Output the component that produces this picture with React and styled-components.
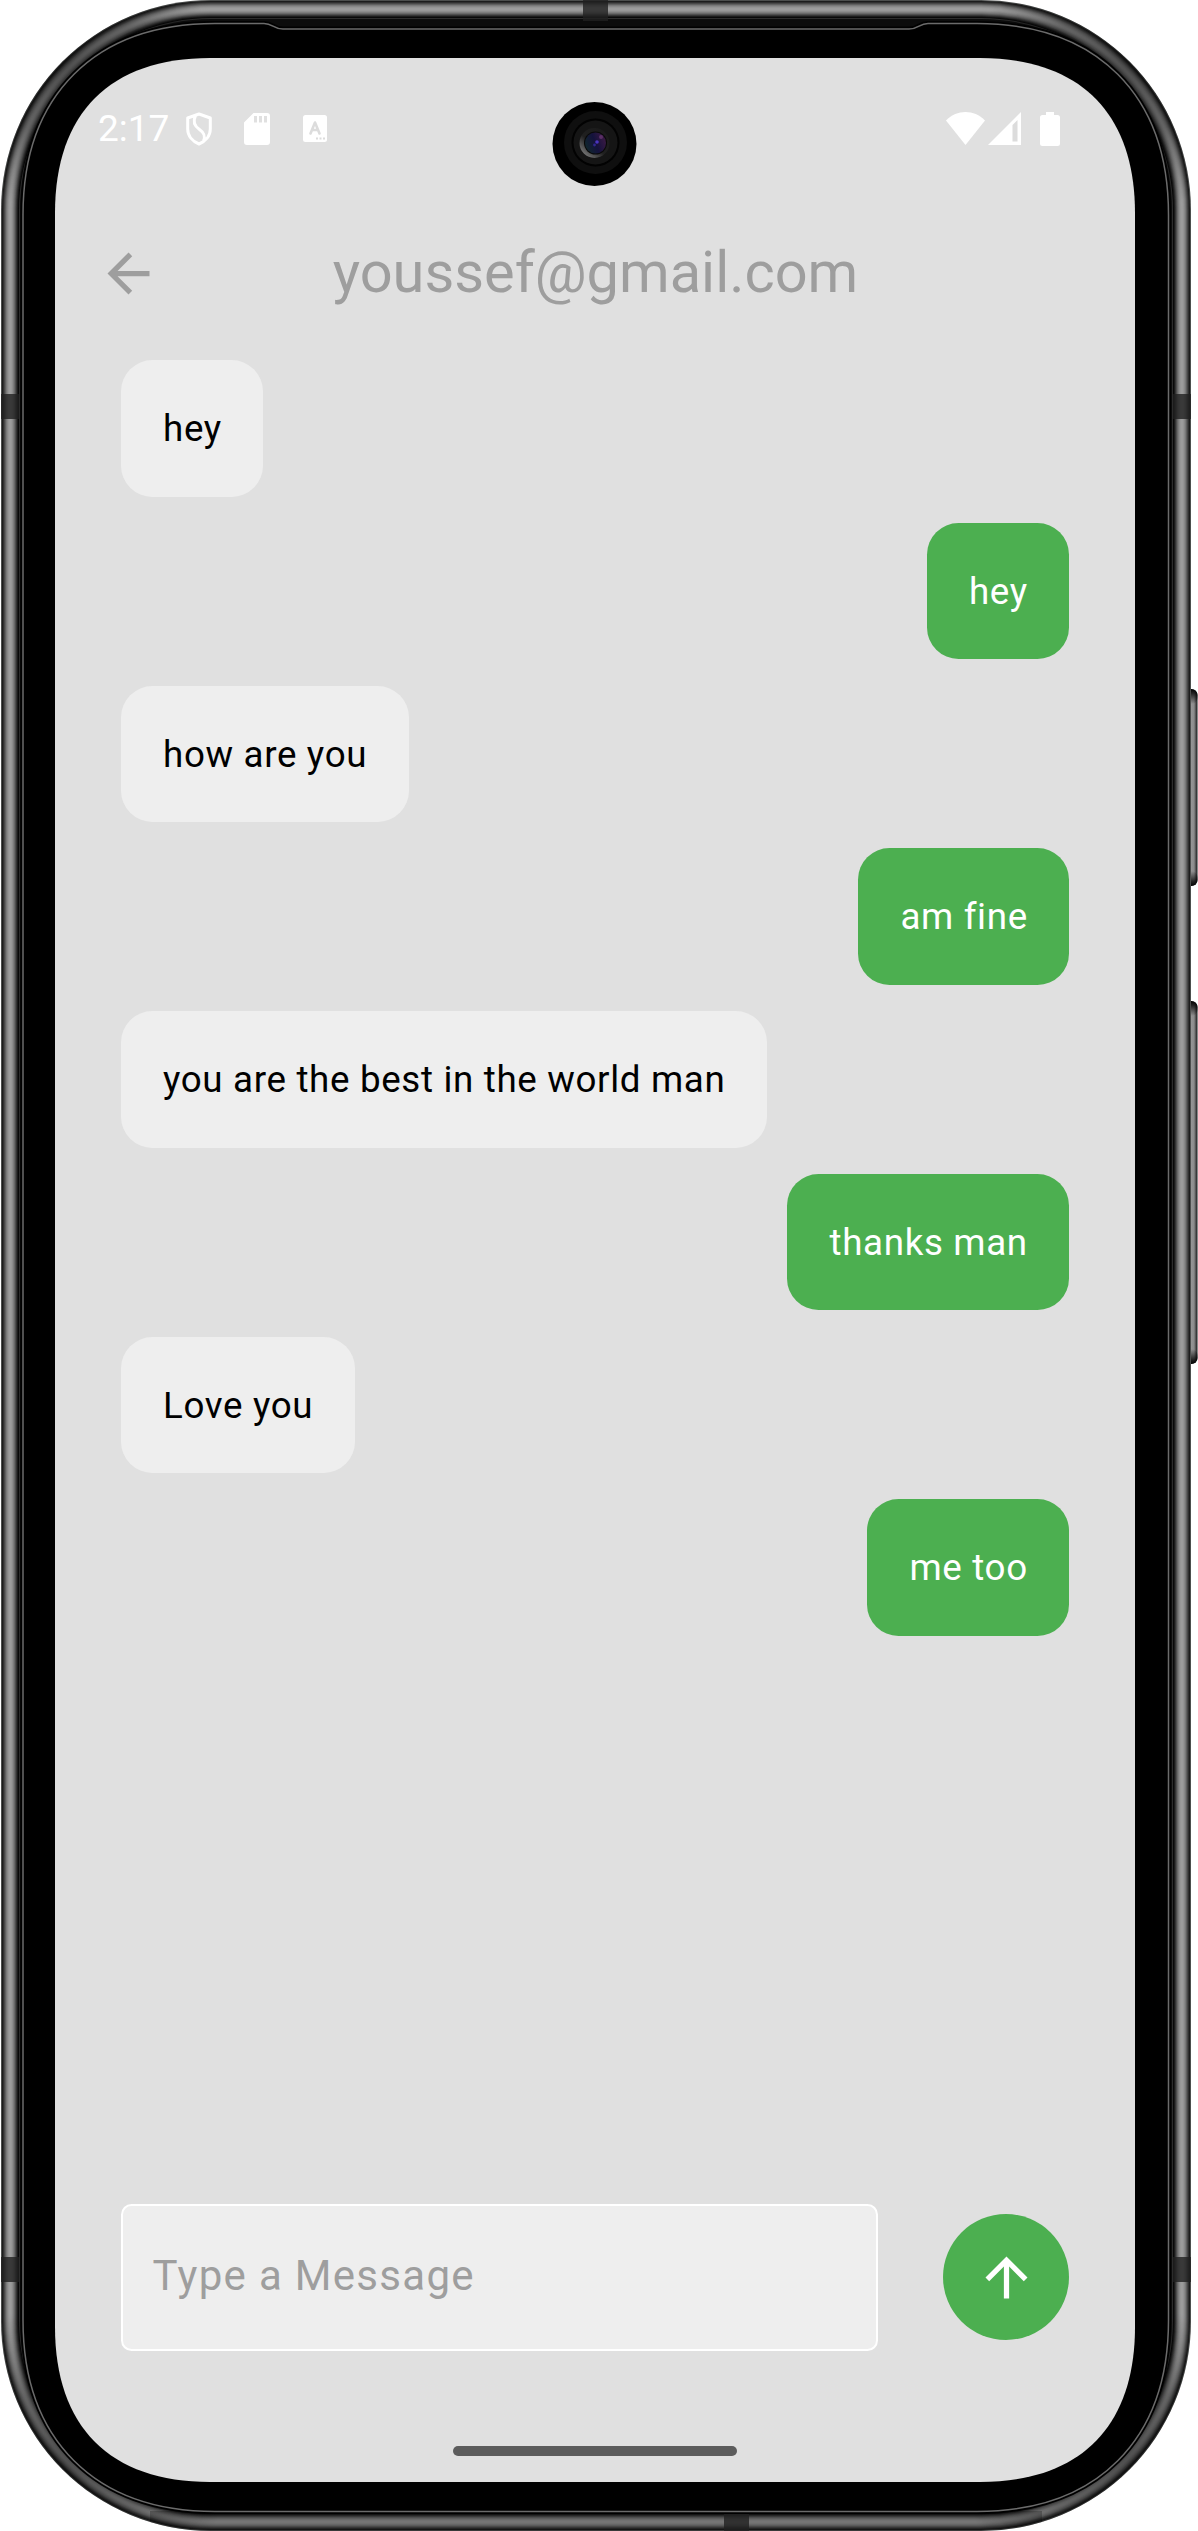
import React from 'react';
import styled, { createGlobalStyle, css } from 'styled-components';

const Global = createGlobalStyle`
  html, body { margin: 0; background: #fff; }
  body { font-family: Roboto, "Liberation Sans", sans-serif; }
  * { box-sizing: border-box; }
`;

const Stage = styled.div`
  position: relative;
  width: 1198px;
  height: 2531px;
  overflow: hidden;
`;

const FrameArt = styled.svg`
  position: absolute;
  inset: 0;
`;

const Screen = styled.main`
  position: relative;
  width: 1080px;
  height: 2424px;
  margin: 58px 0 0 55px;
  clip-path: path("M0 155C0 55 55 0 155 0H925C1025 0 1080 55 1080 155V2269C1080 2369 1025 2424 925 2424H155C55 2424 0 2369 0 2269Z");
  background: #e0e0e0;
  display: flex;
  flex-direction: column;
  overflow: hidden;
`;

const StatusBar = styled.header`
  height: 136px;
  flex: none;
  display: flex;
  align-items: center;
  justify-content: space-between;
  padding: 5px 75px 0 43px;
  color: #fff;
`;

const StatusGroup = styled.div`
  display: flex;
  align-items: center;
`;

const Clock = styled.span`
  font-size: 37px;
  line-height: 44px;
  width: 87px;
  padding-top: 1px;
`;

const AppBar = styled.div`
  height: 147px;
  flex: none;
  display: grid;
  grid-template-columns: 147px 1fr 147px;
  align-items: center;
  color: #9e9e9e;
`;

const BackButton = styled.button`
  border: 0;
  padding: 0;
  margin: 11px 0 0 42px;
  background: none;
  color: inherit;
  width: 63px;
  height: 63px;
`;

const Title = styled.h1`
  margin: 8px 0 0 1px;
  text-align: center;
  font-size: 57.75px;
  font-weight: 400;
  line-height: 74px;
`;

const Messages = styled.section`
  flex: 1;
  display: flex;
  flex-direction: column;
  gap: 26.25px;
  padding: 19px 65.6px 0;
`;

const Bubble = styled.div`
  align-self: flex-start;
  padding: 43px 41.6px 41px 42.4px;
  border-radius: 31.5px;
  font-size: 36.75px;
  line-height: 52.5px;
  letter-spacing: 0.656px;
  white-space: nowrap;
  background: #eeeeee;
  color: #000;
  ${(p) => p.$mine && css`
    align-self: flex-end;
    background: #4caf50;
    color: #fff;
  `}
`;

const Composer = styled.footer`
  flex: none;
  display: flex;
  align-items: center;
  gap: 65.6px;
  padding: 0 65.6px 131px;
`;

const Field = styled.input`
  flex: 1;
  min-width: 0;
  height: 147px;
  border: 2.625px solid #fff;
  border-radius: 10.5px;
  background: #eeeeee;
  padding: 0 29.5px 5px 30px;
  font: 400 42px Roboto, "Liberation Sans", sans-serif;
  letter-spacing: 1.3125px;
  outline: none;
  &::placeholder { color: #9e9e9e; opacity: 1; }
`;

const SendButton = styled.button`
  width: 126px;
  height: 126px;
  margin-bottom: 1px;
  flex: none;
  border: 0;
  padding: 0;
  border-radius: 50%;
  background: #4caf50;
  color: #fff;
  display: grid;
  place-items: center;
`;

const HomeArea = styled.div`
  position: absolute;
  left: 398px;
  bottom: 26px;
  width: 284px;
  height: 10px;
  border-radius: 5px;
  background: #5c5c5c;
`;

const Glyph = styled.svg`
  display: block;
  fill: currentColor;
  flex: none;
  margin-left: ${(p) => p.$before || 0}px;
`;

const CameraArt = styled.svg`
  position: absolute;
  left: 552px;
  top: 101px;
`;

const messages = [
  ['hey', false],
  ['hey', true],
  ['how are you', false],
  ['am fine', true],
  ['you are the best in the world man', false],
  ['thanks man', true],
  ['Love you', false],
  ['me too', true],
];

const metalTones = [
  '#4c4e4d', '#1c1c1c', '#303030', '#484848', '#606060', '#787878', '#888888', '#949494', '#9b9b9b', '#9c9c9c',
  '#979797', '#8c8c8c', '#7c7c7c', '#686868', '#4e4e4e', '#343434', '#1b1b1b', '#090909', '#2c2c2c', '#0c0c0c',
];

const bands = [
  [583, 0, 25, 21], [724, 2513, 25, 18],
  [1, 394, 18, 25], [1173, 394, 18, 25], [1, 2257, 18, 25], [1173, 2257, 18, 25],
];

function Frame() {
  return (
    <FrameArt width="1198" height="2531" viewBox="0 0 1198 2531" aria-hidden="true">
      <defs>
        <linearGradient id="key" x1="0" x2="1">
          <stop offset="0.4" stopColor="#606060" /><stop offset="0.55" stopColor="#999" />
          <stop offset="0.8" stopColor="#8c8c8c" /><stop offset="1" stopColor="#161616" />
        </linearGradient>
        <linearGradient id="keyTop" x1="0" x2="0" y1="0" y2="1">
          <stop offset="0" stopColor="#000" /><stop offset="0.3" stopColor="#000" stopOpacity="0.75" /><stop offset="1" stopColor="#000" stopOpacity="0" />
        </linearGradient>
        <linearGradient id="keyBottom" x1="0" x2="0" y1="1" y2="0">
          <stop offset="0" stopColor="#000" /><stop offset="0.3" stopColor="#000" stopOpacity="0.75" /><stop offset="1" stopColor="#000" stopOpacity="0" />
        </linearGradient>
        <radialGradient id="corner">
          <stop offset="0" stopColor="#000" stopOpacity="0.5" />
          <stop offset="0.5" stopColor="#000" stopOpacity="0.36" />
          <stop offset="1" stopColor="#000" stopOpacity="0" />
        </radialGradient>
        <clipPath id="body"><rect x="1" y="0" width="1190" height="2531" rx="210" /></clipPath>
      </defs>
      {[[689, 197], [1001, 363]].map(([y, h]) => (
        <g key={y}>
          <rect x="1180" y={y} width="17.5" height={h} rx="6" fill="url(#key)" />
          <rect x="1180" y={y} width="17.5" height="15" rx="6" fill="url(#keyTop)" />
          <rect x="1180" y={y + h - 15} width="17.5" height="15" rx="6" fill="url(#keyBottom)" />
        </g>
      ))}
      {metalTones.map((tone, i) => (
        <rect key={i} x={1 + i} y={i} width={1190 - i * 2} height={2531 - i * 2} rx={210 - i} fill={tone} />
      ))}
      <g clipPath="url(#body)">
        <circle cx="60" cy="60" r="150" fill="url(#corner)" />
        <circle cx="1132" cy="60" r="150" fill="url(#corner)" />
        <circle cx="60" cy="2471" r="165" fill="url(#corner)" />
        <circle cx="1132" cy="2471" r="165" fill="url(#corner)" />
        <rect x="150" y="2511" width="892" height="20" fill="#000" opacity="0.25" />
        {bands.map(([x, y, w, h]) => (
          <rect key={`${x}-${y}`} x={x} y={y} width={w} height={h} fill="#202020" opacity="0.8" />
        ))}
      </g>
      <path d="M23 215C23 95 95 23.500 215 23.500H264C273 23.500 273 29 283 29H909C919 29 919 23.500 928 23.500H977C1097 23.500 1168.500 95 1168.500 215V2320C1168.500 2440 1097 2511.500 977 2511.500H215C95 2511.500 23 2440 23 2320Z"
        fill="#000" stroke="#000" strokeWidth="5" />
      <path d="M23 215C23 95 95 23.500 215 23.500H264C273 23.500 273 29 283 29H909C919 29 919 23.500 928 23.500H977C1097 23.500 1168.500 95 1168.500 215V2320C1168.500 2440 1097 2511.500 977 2511.500H215C95 2511.500 23 2440 23 2320Z"
        fill="none" stroke="#6b6b6b" strokeWidth="1.5" />
    </FrameArt>
  );
}

function Camera() {
  return (
    <CameraArt width="86" height="86" viewBox="0 0 86 86" aria-hidden="true">
      <defs>
        <linearGradient id="rim" x1="0.9" y1="0.1" x2="0.2" y2="0.9">
          <stop offset="0" stopColor="#1a1a1a" /><stop offset="0.6" stopColor="#202020" /><stop offset="1" stopColor="#707070" />
        </linearGradient>
        <linearGradient id="lens" x1="0" y1="0.7" x2="1" y2="0.3">
          <stop offset="0" stopColor="#10282c" /><stop offset="0.5" stopColor="#14123c" /><stop offset="1" stopColor="#3c1a44" />
        </linearGradient>
      </defs>
      <circle cx="42.500" cy="43" r="42" fill="#000" />
      <circle cx="43.500" cy="41.500" r="31.500" fill="#0f0f0f" />
      <circle cx="43.500" cy="41.500" r="24" fill="#020202" />
      <circle cx="43.500" cy="41.500" r="22" fill="#151515" />
      <circle cx="42.500" cy="42" r="15" fill="url(#rim)" />
      <circle cx="43.500" cy="42" r="11.500" fill="#090909" />
      <circle cx="43.500" cy="42" r="10.500" fill="url(#lens)" />
      <circle cx="45" cy="41" r="1.800" fill="#4a35c0" />
      <circle cx="42.500" cy="44" r="1.400" fill="#30268c" />
      <circle cx="49" cy="36" r="2" fill="#78407f" opacity="0.6" />
    </CameraArt>
  );
}

export default function App() {
  return (
    <Stage>
      <Global />
      <Frame />
      <Screen>
        <StatusBar>
          <StatusGroup>
            <Clock>2:17</Clock>
            <Glyph width="28" height="34" viewBox="0 0 28 34">
              <path d="M14 2L25.300 6V17C25.300 24 20.500 29.500 14 32C7.500 29.500 2.700 24 2.700 17V6ZM10.500 3.500C7.500 10 10 14.500 14.500 17.500C19.500 21 20.500 24 18.500 29" fill="none" stroke="currentColor" strokeWidth="3" strokeLinejoin="round" />
            </Glyph>
            <Glyph width="26" height="32" viewBox="0 0 26 32" $before={31}>
              <path fillRule="evenodd" d="M9.500 0H23Q26 0 26 3V29Q26 32 23 32H3Q0 32 0 29V9.500ZM10 3V9.500H13V3ZM15 3V9.500H18V3ZM20 3V9.500H23V3Z" />
            </Glyph>
            <Glyph width="24" height="27" viewBox="0 0 24 27" $before={33}>
              <path fillRule="evenodd" d="M2.500 0H21.500Q24 0 24 2.500V24.500Q24 27 21.500 27H2.500Q0 27 0 24.500V2.500Q0 0 2.500 0Z" />
              <path d="M7.500 18.500L12 7.500L16.500 18.500M9 15H15" fill="none" stroke="#dcdcdc" strokeWidth="2.600" strokeLinecap="round" strokeLinejoin="round" />
              <path d="M13 22.500H15V24.500H13ZM16.500 22.500H18.500V24.500H16.500ZM20 22.500H22V24.500H20Z" fill="#dcdcdc" />
            </Glyph>
          </StatusGroup>
          <StatusGroup>
            <Glyph width="39" height="33" viewBox="0 0 39 33"><path d="M0 8.500C11 -2.800 28 -2.800 39 8.500L19.500 33Z" /></Glyph>
            <Glyph width="33" height="33" viewBox="0 0 33 33" $before={3}>
              <path d="M33 0V33H0Z" />
              <path d="M24.500 29.500V13L29.500 8V29.500Z" fill="#dcdcdc" />
            </Glyph>
            <Glyph width="20" height="34" viewBox="0 0 20 34" $before={19}>
              <path d="M6 0H14V3H17.500Q20 3 20 5.500V31.500Q20 34 17.500 34H2.500Q0 34 0 31.500V5.500Q0 3 2.500 3H6Z" />
            </Glyph>
          </StatusGroup>
        </StatusBar>
        <AppBar>
          <BackButton aria-label="Back">
            <Glyph width="63" height="63" viewBox="0 0 24 24"><path d="M20 11H7.830l5.590-5.590L12 4l-8 8 8 8 1.410-1.410L7.830 13H20v-2z" /></Glyph>
          </BackButton>
          <Title>youssef@gmail.com</Title>
        </AppBar>
        <Messages>
          {messages.map(([text, mine], i) => <Bubble key={i} $mine={mine}>{text}</Bubble>)}
        </Messages>
        <Composer>
          <Field placeholder="Type a Message" aria-label="Message" />
          <SendButton aria-label="Send">
            <Glyph width="63" height="63" viewBox="0 0 24 24"><path d="M4 12l1.410 1.410L11 7.830V20h2V7.830l5.580 5.590L20 12l-8-8-8 8z" /></Glyph>
          </SendButton>
        </Composer>
        <HomeArea />
      </Screen>
      <Camera />
    </Stage>
  );
}
